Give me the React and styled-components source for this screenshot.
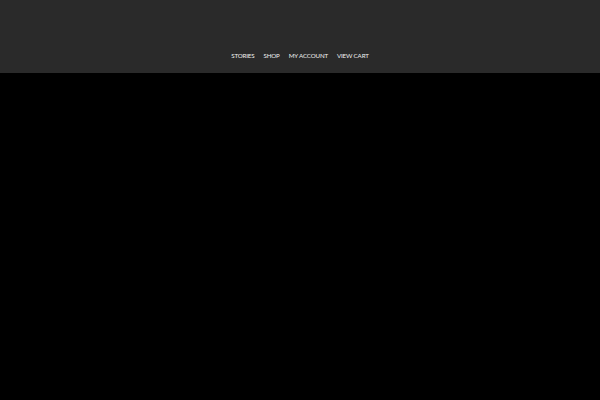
import React from 'react';
import styled, { createGlobalStyle } from 'styled-components';

const GlobalStyle = createGlobalStyle`
  html, body {
    margin: 0;
    padding: 0;
    background: #000;
    height: 100%;
  }
`;

const Header = styled.header`
  background-color: #2a2a2a;
  height: 73px;
  display: flex;
  align-items: flex-end;
  justify-content: center;
  padding-bottom: 11px;
  box-sizing: border-box;
`;

const NavMenu = styled.ul`
  display: flex;
  align-items: center;
  list-style: none;
  margin: 0;
  padding: 0;
  gap: 9px;
`;

const NavLink = styled.a`
  color: #f2f2f2;
  text-decoration: none;
  font-family: Lato, "Open Sans", sans-serif;
  font-size: 6.2px;
  letter-spacing: -0.15px;
  text-transform: uppercase;
  line-height: 8px;
`;

const Main = styled.main`
  background: #000;
  height: 327px;
`;

export default function App() {
  return (
    <>
      <GlobalStyle />
      <Header>
        <NavMenu>
          <li><NavLink href="#">Stories</NavLink></li>
          <li><NavLink href="#">Shop</NavLink></li>
          <li><NavLink href="#">My Account</NavLink></li>
          <li><NavLink href="#">View Cart</NavLink></li>
        </NavMenu>
      </Header>
      <Main />
    </>
  );
}
